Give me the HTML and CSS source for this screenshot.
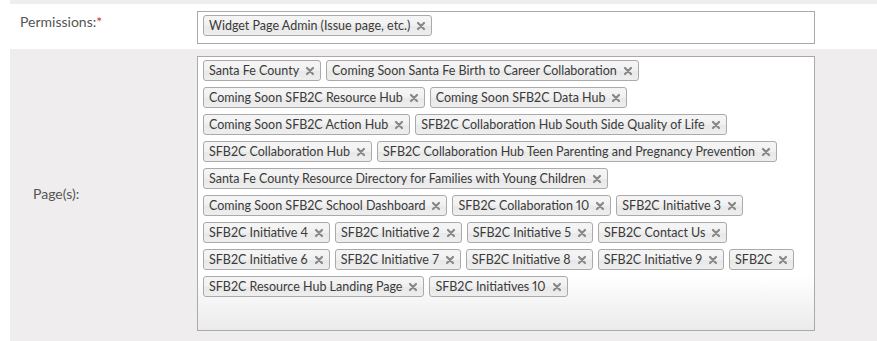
FILE: index.html
```html
<!DOCTYPE html>
<html lang="en">
<head>
<meta charset="UTF-8">
<meta name="viewport" content="width=device-width, initial-scale=1.0">
<title>Edit Permissions</title>
<link rel="stylesheet" href="styles.css">
</head>
<body>
<svg width="0" height="0" class="defs">
<symbol id="x" viewBox="0 0 10 10"><path d="M2 2 L8 8 M8 2 L2 8" stroke="currentColor" stroke-width="2.2" stroke-linecap="round"/></symbol>
</svg>
<div class="form">
<div class="strip"></div>
<div class="row">
<div class="label">Permissions:<span class="req">*</span></div>
<div class="field">
<div class="choices perms">
<span class="chip">Widget Page Admin (Issue page, etc.)<svg class="x"><use href="#x"/></svg></span>
</div>
</div>
</div>
<div class="row alt">
<div class="label center">Page(s):</div>
<div class="field">
<div class="choices pages">
<span class="chip">Santa Fe County<svg class="x"><use href="#x"/></svg></span>
<span class="chip">Coming Soon Santa Fe Birth to Career Collaboration<svg class="x"><use href="#x"/></svg></span>
<span class="chip">Coming Soon SFB2C Resource Hub<svg class="x"><use href="#x"/></svg></span>
<span class="chip">Coming Soon SFB2C Data Hub<svg class="x"><use href="#x"/></svg></span>
<span class="chip">Coming Soon SFB2C Action Hub<svg class="x"><use href="#x"/></svg></span>
<span class="chip">SFB2C Collaboration Hub South Side Quality of Life<svg class="x"><use href="#x"/></svg></span>
<span class="chip">SFB2C Collaboration Hub<svg class="x"><use href="#x"/></svg></span>
<span class="chip">SFB2C Collaboration Hub Teen Parenting and Pregnancy Prevention<svg class="x"><use href="#x"/></svg></span>
<span class="chip">Santa Fe County Resource Directory for Families with Young Children<svg class="x"><use href="#x"/></svg></span>
<span class="chip">Coming Soon SFB2C School Dashboard<svg class="x"><use href="#x"/></svg></span>
<span class="chip">SFB2C Collaboration 10<svg class="x"><use href="#x"/></svg></span>
<span class="chip">SFB2C Initiative 3<svg class="x"><use href="#x"/></svg></span>
<span class="chip">SFB2C Initiative 4<svg class="x"><use href="#x"/></svg></span>
<span class="chip">SFB2C Initiative 2<svg class="x"><use href="#x"/></svg></span>
<span class="chip">SFB2C Initiative 5<svg class="x"><use href="#x"/></svg></span>
<span class="chip">SFB2C Contact Us<svg class="x"><use href="#x"/></svg></span>
<span class="chip">SFB2C Initiative 6<svg class="x"><use href="#x"/></svg></span>
<span class="chip">SFB2C Initiative 7<svg class="x"><use href="#x"/></svg></span>
<span class="chip">SFB2C Initiative 8<svg class="x"><use href="#x"/></svg></span>
<span class="chip">SFB2C Initiative 9<svg class="x"><use href="#x"/></svg></span>
<span class="chip">SFB2C<svg class="x"><use href="#x"/></svg></span>
<span class="chip">SFB2C Resource Hub Landing Page<svg class="x"><use href="#x"/></svg></span>
<span class="chip">SFB2C Initiatives 10<svg class="x"><use href="#x"/></svg></span>
</div>
</div>
</div>
</div>
</body>
</html>
```

FILE: styles.css
```css
body {
margin: 0;
background-color: #fff;
font-family: Lato, 'Open Sans', sans-serif;
color: #444;
}

.defs {
position: absolute;
}

.form {
padding-left: 10px;
}

.strip {
height: 4px;
background-color: #efeeef;
}

.row {
display: flex;
padding: 7px 0 5px 0;
}

.row.alt {
background-color: #efedee;
padding: 7px 0 10px 0;
}

.label {
width: 187px;
padding: 2px 0 0 10px;
box-sizing: border-box;
font-size: 14px;
color: #555;
}

.label.center {
display: flex;
align-items: center;
padding: 0 0 0 23px;
}

.req {
color: #c33;
}

.field {
width: 618px;
}

.choices {
display: flex;
flex-wrap: wrap;
align-content: flex-start;
gap: 6px 5px;
border: 1px solid #aaa;
background-color: #fff;
padding: 3px 5px;
box-sizing: border-box;
}

.perms {
height: 33px;
}

.pages {
height: 275px;
background-image: linear-gradient(to bottom, #fff 80%, #ebebeb 100%);
}

.chip {
display: inline-flex;
align-items: center;
height: 21px;
box-sizing: border-box;
padding: 0 5px;
border: 1px solid #aaa;
border-radius: 3px;
background-image: linear-gradient(to bottom, #f4f4f4 20%, #f0f0f0 50%, #e8e8e8 52%, #eee 100%);
font-size: 12.5px;
font-variant-numeric: proportional-nums;
color: #3a3a3a;
white-space: nowrap;
}

.x {
width: 10px;
height: 10px;
color: #888;
margin-left: 6px;
}
```
